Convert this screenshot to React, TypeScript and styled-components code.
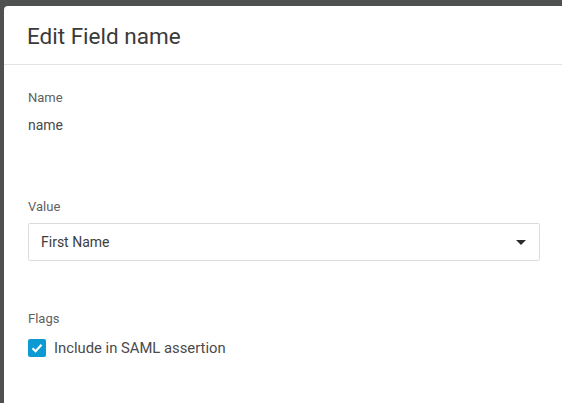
import React from "react";
import styled, { createGlobalStyle } from "styled-components";

const Global = createGlobalStyle`
  html, body { margin: 0; padding: 0; background: #4f5150; }
  body { font-family: Roboto, "Noto Sans", sans-serif; }
  * { box-sizing: border-box; }
`;

const Backdrop = styled.div`
  width: 562px;
  height: 403px;
  padding: 6px 0 0 4px;
  background: #4f5150;
  overflow: hidden;
`;

const Dialog = styled.div`
  background: #fff;
  border-radius: 4px 0 0 0;
  height: 420px;
  display: flex;
  flex-direction: column;
`;

const Header = styled.div`
  height: 59px;
  padding: 0 23px;
  display: flex;
  align-items: center;
  border-bottom: 1px solid #e3e3e3;
`;

const Title = styled.h2`
  margin: 0;
  font-size: 22.5px;
  font-weight: 400;
  color: #3a3a3a;
  padding-top: 1px;
`;

const Body = styled.div`
  padding: 24px 22px 0 24px;
  display: flex;
  flex-direction: column;
`;

const Section = styled.div<{ $h: number }>`
  height: ${(p) => p.$h}px;
  display: flex;
  flex-direction: column;
`;

const Label = styled.div<{ $gap: number }>`
  font-size: 13px;
  color: #616161;
  line-height: 18px;
  margin-bottom: ${(p) => p.$gap}px;
`;

const ValueText = styled.div`
  font-size: 14px;
  color: #4a4a4a;
  line-height: 18px;
`;

const Select = styled.div`
  height: 38px;
  border: 1px solid #dcdcdc;
  border-radius: 2px;
  display: flex;
  align-items: center;
  justify-content: space-between;
  padding: 0 13px 0 12px;
  font-size: 14px;
  color: #3d3d3d;
`;

const Caret = styled.span`
  width: 0;
  height: 0;
  border-left: 5px solid transparent;
  border-right: 5px solid transparent;
  border-top: 5px solid #2b2b2b;
`;

const CheckRow = styled.label`
  display: flex;
  align-items: center;
  gap: 8px;
  font-size: 14.8px;
  color: #4a4a4a;
`;

const Box = styled.span`
  width: 18px;
  height: 18px;
  border-radius: 2px;
  background: #0c9ad3;
  display: flex;
  align-items: center;
  justify-content: center;
`;

export default function App() {
  return (
    <>
      <Global />
      <Backdrop>
        <Dialog>
          <Header>
            <Title>Edit Field name</Title>
          </Header>
          <Body>
            <Section $h={109}>
              <Label $gap={9}>Name</Label>
              <ValueText>name</ValueText>
            </Section>
            <Section $h={112}>
              <Label $gap={7}>Value</Label>
              <Select>
                <span>First Name</span>
                <Caret />
              </Select>
            </Section>
            <Section $h={80}>
              <Label $gap={11}>Flags</Label>
              <CheckRow>
                <Box>
                  <svg width="14" height="14" viewBox="0 0 14 14">
                    <path d="M2.5 7.2 L5.6 10.2 L11.5 3.8" fill="none" stroke="#fff" strokeWidth="2.2" />
                  </svg>
                </Box>
                Include in SAML assertion
              </CheckRow>
            </Section>
          </Body>
        </Dialog>
      </Backdrop>
    </>
  );
}
